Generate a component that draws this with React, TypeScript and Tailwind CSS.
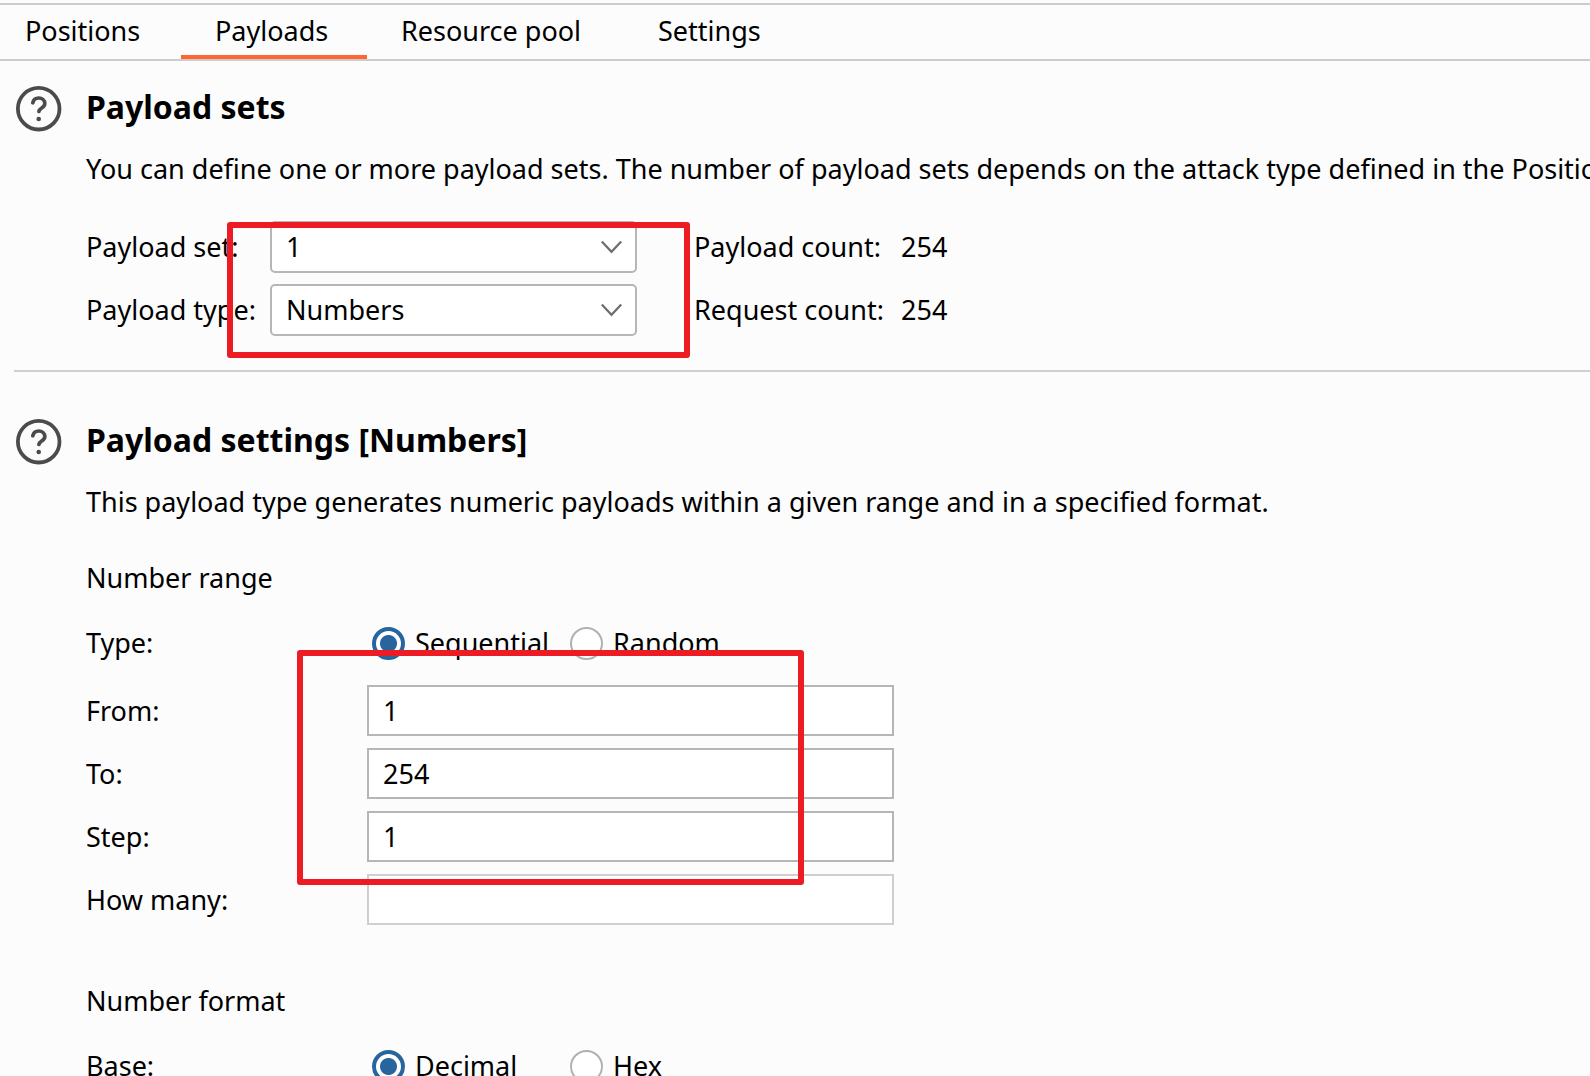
import { useState, type ReactNode } from "react";

const TABS = [
  { name: "Positions", size: "w-[181px] pl-[25px]" },
  { name: "Payloads", size: "w-[186px] pl-[34px]" },
  { name: "Resource pool", size: "w-[257px] pl-[34px]" },
  { name: "Settings", size: "w-[174px] pl-[34px]" },
];

function HelpIcon() {
  return (
    <svg viewBox="0 0 46 46" className="h-[46px] w-[46px]" fill="none" stroke="#4b4b4b" aria-hidden="true">
      <circle cx="22.7" cy="22.7" r="20.8" strokeWidth="3.8" />
      <path d="M16.800 16.800C17.400 14 19.800 12 22.700 12C26.100 12 28.800 14.400 28.800 17.500C28.800 22 23.400 21.800 22.900 25.400" strokeWidth="3.700" strokeLinecap="round" />
      <circle cx="22.7" cy="33" r="2.300" fill="#4b4b4b" stroke="none" />
    </svg>
  );
}

function Section({ title, description, children }: { title: string; description: string; children: ReactNode }) {
  return (
    <section className="flex gap-6 pl-4">
      <button type="button" aria-label={`Help: ${title}`} className="shrink-0 self-start">
        <HelpIcon />
      </button>
      <div className="min-w-0 flex-1">
        <h2 className="text-[32px] leading-[42px] font-bold whitespace-nowrap">{title}</h2>
        <p className="mt-5 leading-[42px] whitespace-nowrap">{description}</p>
        {children}
      </div>
    </section>
  );
}

function Highlight({ className }: { className: string }) {
  return <div aria-hidden="true" className={`pointer-events-none absolute rounded-[3px] border-[6px] border-[#ed1c24] ${className}`} />;
}

function SelectRow({ id, label, value, options, countLabel, count }: { id: string; label: string; value: string; options: string[]; countLabel: string; count: string }) {
  return (
    <div className="flex h-[52px] items-center whitespace-nowrap">
      <label htmlFor={id} className="w-[184px] shrink-0">{label}</label>
      <div className="relative w-[367px] shrink-0">
        <select id={id} defaultValue={value} className="h-[52px] w-full appearance-none rounded-[5px] border-2 border-[#bab5b5] bg-white pr-12 pl-[14px] outline-none">
          {options.map((o) => (
            <option key={o}>{o}</option>
          ))}
        </select>
        <svg viewBox="0 0 22 14" className="pointer-events-none absolute top-[19px] right-[14px] h-[14px] w-[22px]" fill="none" stroke="#6e6e6e" strokeWidth="2.200" aria-hidden="true">
          <path d="M0.800 1.500L10.500 11.800L20.200 1.500" />
        </svg>
      </div>
      <span className="ml-[57px] w-[207px] shrink-0">{countLabel}</span>
      <span>{count}</span>
    </div>
  );
}

function RadioRow({ label, name, options, value, onChange }: { label: string; name: string; options: string[]; value: string; onChange: (v: string) => void }) {
  return (
    <div role="radiogroup" aria-label={label} className="flex h-[42px] items-center whitespace-nowrap">
      <span className="w-[286px] shrink-0">{label}</span>
      {options.map((o) => (
        <label key={o} className="flex w-[198px] shrink-0 items-center gap-[10px]">
          <input
            type="radio"
            name={name}
            checked={value === o}
            onChange={() => onChange(o)}
            className="h-[33px] w-[33px] shrink-0 appearance-none rounded-full border-2 border-[#b0b0b0] bg-white checked:border-4 checked:border-[#27659f] checked:bg-[radial-gradient(circle,#27659f_8px,#fff_9px)]"
          />
          {o}
        </label>
      ))}
    </div>
  );
}

function TextRow({ id, label, value, disabled }: { id: string; label: string; value: string; disabled?: boolean }) {
  return (
    <div className="flex items-center whitespace-nowrap">
      <label htmlFor={id} className="w-[281px] shrink-0 pt-px">{label}</label>
      <input
        id={id}
        type="text"
        defaultValue={value}
        disabled={disabled}
        className="h-[51px] w-[527px] border-2 border-[#bab5b5] bg-white px-[14px] outline-none disabled:border-[#cfcfcf]"
      />
    </div>
  );
}

export default function App() {
  const [tab, setTab] = useState("Payloads");
  const [type, setType] = useState("Sequential");
  const [base, setBase] = useState("Decimal");

  return (
    <main className="h-screen overflow-hidden bg-[#fcfcfc] pt-[3px] font-['Noto_Sans','Open_Sans',sans-serif] text-[27px] text-black">
      <nav role="tablist" className="flex border-y-2 border-[#c9cdcd] whitespace-nowrap">
        {TABS.map((t) => (
          <button
            key={t.name}
            type="button"
            role="tab"
            aria-selected={tab === t.name}
            onClick={() => setTab(t.name)}
            className={`h-[54px] shrink-0 border-b-4 border-transparent pt-[2px] text-left leading-[48px] aria-selected:border-[#ff6633] ${t.size}`}
          >
            {t.name}
          </button>
        ))}
      </nav>

      <div className="pt-[25px]">
        <Section
          title="Payload sets"
          description="You can define one or more payload sets. The number of payload sets depends on the attack type defined in the Positions tab."
        >
          <div className="relative mt-[31px] flex flex-col gap-[11px]">
            <SelectRow id="payload-set" label="Payload set:" value="1" options={["1"]} countLabel="Payload count:" count="254" />
            <SelectRow id="payload-type" label="Payload type:" value="Numbers" options={["Numbers"]} countLabel="Request count:" count="254" />
            <Highlight className="top-px left-[141px] h-[136px] w-[463px]" />
          </div>
        </Section>

        <hr className="mt-[34px] mb-[47px] ml-[14px] border-t-2 border-[#cfcfcf]" />

        <Section
          title="Payload settings [Numbers]"
          description="This payload type generates numeric payloads within a given range and in a specified format."
        >
          <h3 className="mt-[34px] leading-[42px]">Number range</h3>
          <div className="relative mt-[23px]">
            <RadioRow label="Type:" name="type" options={["Sequential", "Random"]} value={type} onChange={setType} />
            <div className="mt-[21px] flex flex-col gap-3">
              <TextRow id="from" label="From:" value="1" />
              <TextRow id="to" label="To:" value="254" />
              <TextRow id="step" label="Step:" value="1" />
              <TextRow id="how-many" label="How many:" value="" disabled />
            </div>
            <Highlight className="top-[28px] left-[211px] h-[235px] w-[507px]" />
          </div>
          <h3 className="mt-[55px] leading-[42px]">Number format</h3>
          <div className="mt-[23px]">
            <RadioRow label="Base:" name="base" options={["Decimal", "Hex"]} value={base} onChange={setBase} />
          </div>
        </Section>
      </div>
    </main>
  );
}
